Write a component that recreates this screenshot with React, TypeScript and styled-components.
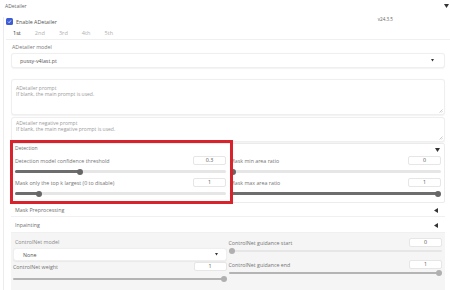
import styled, { createGlobalStyle } from "styled-components";

const GlobalStyle = createGlobalStyle`
  html, body {
    margin: 0;
    padding: 0;
    background: #ffffff;
  }
  body {
    font-family: "Open Sans", "Noto Sans", sans-serif;
    font-size: 5.3px;
    color: #747474;
  }
  * { box-sizing: border-box; }
`;

const Down = ({ size = 5 }: { size?: number }) => (
  <svg width={size} height={size * 0.8} viewBox="0 0 10 8">
    <polygon points="0,0 10,0 5,8" fill="#333" />
  </svg>
);

const Left = () => (
  <svg width={4} height={5} viewBox="0 0 8 10">
    <polygon points="8,0 8,10 0,5" fill="#333" />
  </svg>
);

const Grip = () => (
  <GripMark width={4} height={4} viewBox="0 0 8 8">
    <path d="M7 1 L1 7 M7 4.5 L4.5 7" stroke="#9a9a9a" strokeWidth="1" />
  </GripMark>
);

type SliderProps = { value: number; mt: number; mb: number; muted?: boolean };

const Slider = ({ value, mt, mb, muted }: SliderProps) => (
  <SliderWrap $mt={mt} $mb={mb}>
    <Track />
    <Fill $muted={muted} style={{ width: `calc(${value} * (100% - 6px) + 3px)` }} />
    <Thumb $muted={muted} style={{ left: `calc(${value} * (100% - 6px))` }} />
  </SliderWrap>
);

type FieldProps = {
  label: string;
  num: string;
  value: number;
  mt: number;
  mb: number;
  muted?: boolean;
};

const NumField = ({ label, num, value, mt, mb, muted }: FieldProps) => (
  <div>
    <NumRow>
      <span>{label}</span>
      <NumBox>{num}</NumBox>
    </NumRow>
    <Slider value={value} mt={mt} mb={mb} muted={muted} />
  </div>
);

const App = () => {
  return (
    <Page>
      <GlobalStyle />
      <TopBar>
        <span>ADetailer</span>
        <Down />
      </TopBar>
      <Body>
        <EnableRow>
          <Check>
            <svg width={5} height={5} viewBox="0 0 10 10">
              <path d="M2 5.2 L4.2 7.4 L8 2.8" stroke="#fff" strokeWidth="1.6" fill="none" />
            </svg>
          </Check>
          <EnableText>Enable ADetailer</EnableText>
          <Version>v24.3.5</Version>
        </EnableRow>
        <TabRow>
          <Tab $active>1st</Tab>
          <Tab>2nd</Tab>
          <Tab>3rd</Tab>
          <Tab>4th</Tab>
          <Tab>5th</Tab>
        </TabRow>
        <Panel>
          <FieldLabel>ADetailer model</FieldLabel>
          <Select $h={15} $pl={8} $pr={10}>
            <span>pussy-v4last.pt</span>
            <Down size={3} />
          </Select>
          <TextBox $h={36} $mt={11} $pt={5}>
            <Hint>ADetailer prompt</Hint>
            <Hint>If blank, the main prompt is used.</Hint>
            <Grip />
          </TextBox>
          <TextBox $h={25} $mt={2} $pt={2}>
            <Hint>ADetailer negative prompt</Hint>
            <Hint>If blank, the main negative prompt is used.</Hint>
            <Grip />
          </TextBox>
          <Block>
            <BlockHead>
              <span>Detection</span>
              <CaretBox>
                <Down />
              </CaretBox>
            </BlockHead>
            <TwoCols $gap={4}>
              <div>
                <NumField label="Detection model confidence threshold" num="0.3" value={0.3} mt={2.5} mb={2.5} />
                <NumField label="Mask only the top k largest (0 to disable)" num="1" value={0.1} mt={2.5} mb={2.5} />
              </div>
              <div>
                <NumField label="Mask min area ratio" num="0" value={0} mt={2.5} mb={2.5} />
                <NumField label="Mask max area ratio" num="1" value={1} mt={2.5} mb={2.5} />
              </div>
            </TwoCols>
          </Block>
          <AccRow $h={14}>
            <span>Mask Preprocessing</span>
            <Left />
          </AccRow>
          <AccRow $h={16}>
            <span>Inpainting</span>
            <Left />
          </AccRow>
          <Inner>
            <TwoCols $gap={2}>
              <div>
                <InnerLabel>ControlNet model</InnerLabel>
                <Select $h={13} $pl={9} $pr={8}>
                  <span>None</span>
                  <Down size={3} />
                </Select>
                <NumField label="ControlNet weight" num="1" value={1} mt={4} mb={2} muted />
              </div>
              <RightInner>
                <NumField label="ControlNet guidance start" num="0" value={0} mt={0} mb={5} muted />
                <NumField label="ControlNet guidance end" num="1" value={1} mt={0} mb={5} muted />
              </RightInner>
            </TwoCols>
          </Inner>
        </Panel>
      </Body>
      <Highlight />
    </Page>
  );
};

const Page = styled.div`
  position: relative;
  width: 450px;
  height: 290px;
  overflow: hidden;
  background: #ffffff;
`;

const TopBar = styled.div`
  display: flex;
  align-items: center;
  justify-content: space-between;
  height: 12px;
  padding: 0 1px 0 5px;
  color: #666;
  font-size: 5px;
`;

const Body = styled.div`
  margin-left: 3px;
  border-left: 1px solid #ececec;
  padding-left: 2px;
  height: 278px;
`;

const EnableRow = styled.div`
  display: flex;
  align-items: center;
  height: 9px;
  margin-top: 5px;
`;

const Check = styled.span`
  width: 7px;
  height: 7px;
  border-radius: 1.5px;
  background: #3d5cd6;
  display: flex;
  align-items: center;
  justify-content: center;
  margin-right: 3px;
`;

const EnableText = styled.span`
  color: #555;
  font-size: 5.3px;
`;

const Version = styled.span`
  align-self: flex-start;
  line-height: 5px;
  margin-left: auto;
  margin-right: 57px;
  color: #666;
  font-size: 4.6px;
`;

const TabRow = styled.div`
  display: flex;
  height: 13px;
  margin-top: 1px;
  border-bottom: 1px solid #f0f0f0;
`;

const Tab = styled.div<{ $active?: boolean }>`
  display: flex;
  align-items: center;
  padding: 0 7px 1px;
  font-size: 5.6px;
  color: ${(p) => (p.$active ? "#333" : "#b0b0b0")};
`;

const Panel = styled.div`
  padding: 3px 5px 0 5px;
`;

const FieldLabel = styled.div`
  height: 9px;
  line-height: 9px;
  padding-left: 1px;
  color: #7a7a7a;
`;

const Select = styled.div<{ $h: number; $pl: number; $pr: number }>`
  display: flex;
  align-items: center;
  justify-content: space-between;
  height: ${(p) => p.$h}px;
  margin-top: 1px;
  padding: 0 ${(p) => p.$pr}px 0 ${(p) => p.$pl}px;
  background: #ffffff;
  border: 1px solid #efefef;
  border-radius: 3px;
  box-shadow: 0 0.5px 1px rgba(0, 0, 0, 0.05);
  color: #555;
`;

const TextBox = styled.div<{ $h: number; $mt: number; $pt: number }>`
  position: relative;
  height: ${(p) => p.$h}px;
  margin-top: ${(p) => p.$mt}px;
  padding: ${(p) => p.$pt}px 4px 0;
  background: #ffffff;
  border: 1px solid #efefef;
  border-radius: 3px;
  box-shadow: 0 0.5px 1px rgba(0, 0, 0, 0.05);
  color: #9a9a9a;
`;

const Hint = styled.div`
  height: 6px;
  line-height: 6px;
  font-size: 5px;
`;

const GripMark = styled.svg`
  position: absolute;
  right: 1px;
  bottom: 1px;
`;

const Block = styled.div`
  margin-top: 1px;
  height: 60px;
  padding: 0 3px 0 3px;
  border: 1px solid #ececec;
  border-radius: 2px;
`;

const BlockHead = styled.div`
  display: flex;
  justify-content: space-between;
  height: 11px;
  line-height: 8px;
  color: #6f6f6f;
  font-size: 5px;
`;

const CaretBox = styled.span`
  padding: 4px 1px 0 0;
  line-height: 0;
`;

const TwoCols = styled.div<{ $gap: number }>`
  display: grid;
  grid-template-columns: 1fr 1fr;
  column-gap: ${(p) => p.$gap}px;
`;

const NumRow = styled.div`
  display: flex;
  align-items: center;
  justify-content: space-between;
  height: 11px;
  color: #747474;
`;

const NumBox = styled.div`
  width: 33px;
  height: 9px;
  line-height: 7px;
  text-align: center;
  background: #ffffff;
  border: 1px solid #e6e6e6;
  border-radius: 2px;
  color: #555;
`;

const SliderWrap = styled.div<{ $mt: number; $mb: number }>`
  position: relative;
  height: 6px;
  margin: ${(p) => p.$mt}px 0 ${(p) => p.$mb}px;
`;

const Track = styled.div`
  position: absolute;
  left: 0;
  right: 0;
  top: 1.75px;
  height: 2.5px;
  border-radius: 2px;
  background: #e6e6e6;
`;

const Fill = styled.div<{ $muted?: boolean }>`
  position: absolute;
  left: 0;
  top: 1.75px;
  height: 2.5px;
  border-radius: 2px;
  background: ${(p) => (p.$muted ? "#b4b4b4" : "#6d6d6d")};
`;

const Thumb = styled.div<{ $muted?: boolean }>`
  position: absolute;
  top: 0;
  width: 6px;
  height: 6px;
  border-radius: 50%;
  background: ${(p) => (p.$muted ? "#b0b0b0" : "#666")};
`;

const AccRow = styled.div<{ $h: number }>`
  display: flex;
  align-items: center;
  justify-content: space-between;
  height: ${(p) => p.$h}px;
  padding: 1px 7px 0 4px;
  border-bottom: 1px solid #f0f0f0;
  color: #6f6f6f;
`;

const Inner = styled.div`
  background: #f5f5f5;
  height: 60px;
  padding: 4px 3px 0 2px;
`;

const InnerLabel = styled.div`
  height: 10px;
  line-height: 10px;
  padding-left: 2px;
  color: #888;
`;

const RightInner = styled.div`
  color: #888;
`;

const Highlight = styled.div`
  position: absolute;
  left: 10px;
  top: 140px;
  width: 223px;
  height: 64px;
  border: 3px solid #d8222c;
  pointer-events: none;
`;

export default App;
